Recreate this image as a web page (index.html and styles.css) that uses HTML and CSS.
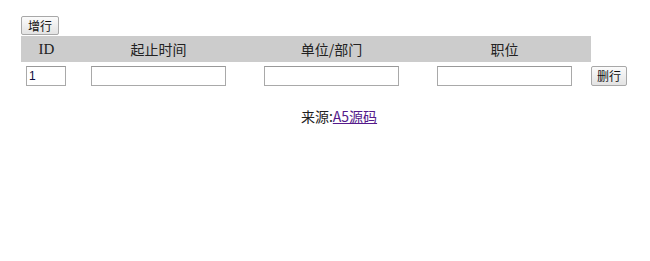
FILE: index.html
```html
<!DOCTYPE html>
<html lang="zh">
<head>
<meta charset="utf-8">
<title>增行删行</title>
<link rel="stylesheet" href="styles.css">
</head>
<body>
<div class="wrap">
  <button class="btn add" type="button">增行</button>
  <table class="grid">
    <colgroup>
      <col class="c-id">
      <col class="c-wide">
      <col class="c-wide">
      <col class="c-wide">
      <col class="c-op">
    </colgroup>
    <thead>
      <tr>
        <th class="latin">ID</th>
        <th>起止时间</th>
        <th>单位/部门</th>
        <th>职位</th>
        <th class="blank"></th>
      </tr>
    </thead>
    <tbody>
      <tr>
        <td><input class="field small" type="text" value="1"></td>
        <td><input class="field" type="text"></td>
        <td><input class="field" type="text"></td>
        <td><input class="field" type="text"></td>
        <td class="op"><button class="btn del" type="button">删行</button></td>
      </tr>
    </tbody>
  </table>
</div>
<div class="source">来源:<a href="#">A5源码</a></div>
</body>
</html>
```
FILE: styles.css
```css
html, body {
  margin: 0;
  padding: 0;
  background: #fff;
}
body {
  margin: 8px;
  font-family: "Noto Sans CJK SC", sans-serif;
  font-size: 14px;
  color: #222;
}
.wrap {
  padding: 8px 0 0 13px;
}
.btn {
  display: block;
  box-sizing: border-box;
  padding: 0;
  margin: 0;
  font-family: "Noto Sans CJK SC", sans-serif;
  font-size: 12px;
  line-height: 16px;
  color: #111;
  background: linear-gradient(#fbfbfb, #e3e3e3);
  border: 1px solid #a8a8a8;
  border-radius: 2px;
}
.add {
  width: 38px;
  height: 19px;
  margin-bottom: 1px;
}
.del {
  width: 36px;
  height: 20px;
}
.grid {
  border-collapse: collapse;
  table-layout: fixed;
  width: 608px;
}
.c-id { width: 51px; }
.c-wide { width: 173px; }
.c-op { width: 38px; }
.grid th {
  height: 26px;
  padding: 0;
  background: #cccccc;
  font-weight: normal;
  font-size: 14px;
  line-height: 26px;
  color: #222;
  text-align: center;
}
.grid th.latin {
  font-family: "Liberation Serif", serif;
  font-size: 15px;
}
.grid th.blank {
  background: transparent;
}
.grid td {
  padding: 4px 0 0 0;
  text-align: center;
  vertical-align: top;
}
.grid td.op {
  text-align: left;
}
.field {
  box-sizing: border-box;
  display: block;
  margin: 0 auto;
  width: 135px;
  height: 20px;
  padding: 0 2px;
  border: 1px solid #a9a9a9;
  border-top-color: #999;
  background: #fff;
  font-family: "Liberation Sans", sans-serif;
  font-size: 12px;
  color: #0a0a3c;
  outline: none;
}
.field.small {
  width: 40px;
  margin-left: 5px;
}
.source {
  margin-top: 20px;
  padding-left: 28px;
  text-align: center;
  font-size: 14px;
  line-height: 20px;
  color: #222;
}
.source a {
  color: #551a8b;
  text-decoration: underline;
}
```
